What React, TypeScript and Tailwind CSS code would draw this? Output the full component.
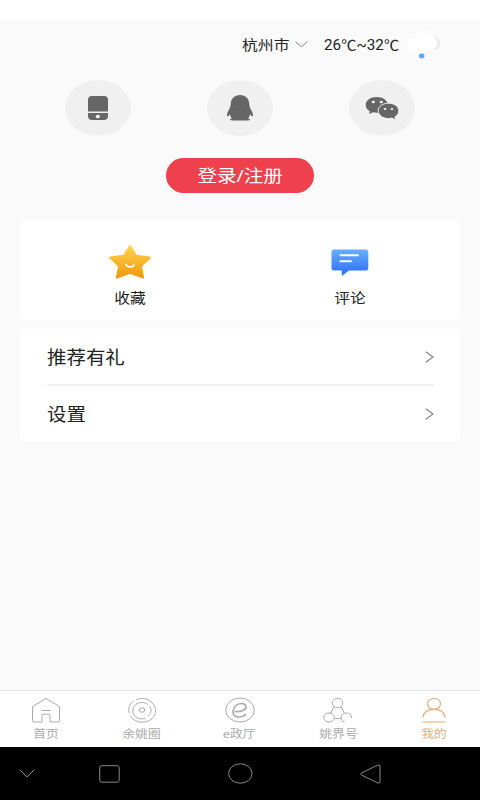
import React from 'react';

interface TabProps {
  label: string;
  className: string;
  children: React.ReactNode;
}

const PhoneIcon = () => (
  <svg className="w-[66px] h-[56px]" viewBox="0 0 66 56">
    <path d="M23 31.500V20q0-4 4-4h12q4 0 4 4v11.500z" fill="#666" />
    <path d="M23 33h20V36q0 4-4 4H27q-4 0-4-4z" fill="#666" />
    <ellipse cx="32.800" cy="36.500" rx="2.100" ry="1.700" fill="#fff" />
  </svg>
);

const QQIcon = () => (
  <svg className="w-[66px] h-[56px]" viewBox="0 0 66 56">
    <path
      d="M33 15c-5.500 0-9 3.500-9.300 9-.1 2.500-.9 4.200-1.900 6-1.700 3-2.300 5.700-1.500 6.300.6.400 1.700-.6 2.700-2 .2 1.800 1 3.200 2 4.200-1.200.3-1.900.7-1.900 1.200 0 .6 1 .8 3.200.8h13.400c2.200 0 3.200-.2 3.200-.8 0-.5-.7-.9-1.900-1.200 1-1 1.800-2.400 2-4.200 1 1.400 2.100 2.400 2.700 2 .8-.6.200-3.300-1.500-6.300-1-1.800-1.800-3.500-1.900-6-.3-5.500-3.800-9-9.300-9z"
      fill="#666"
    />
    <path d="M28 26.500h4M36 26.500h3" stroke="#777" strokeWidth="0.700" />
  </svg>
);

const WechatIcon = () => (
  <svg className="w-[66px] h-[56px]" viewBox="0 0 66 56">
    <path d="M27.700 17c-6.400 0-11 3.500-11 8 0 2.700 1.500 4.800 4.100 6.200L20 34l4.200-1.700c1.100.3 2.300.5 3.500.5 6.400 0 11-3.300 11-7.800s-4.600-8-11-8z" fill="#666" />
    <path
      d="M39.500 23.200c-6 0-10.300 3.300-10.300 7.600s4.300 7.700 10.300 7.700c1.200 0 2.300-.1 3.300-.4l3.900 1.900-.8-3.100c2.400-1.400 3.900-3.500 3.900-6.100 0-4.300-4.300-7.600-10.300-7.600z"
      fill="#666"
      stroke="#f0f0f0"
      strokeWidth="1"
    />
    <g fill="#f4f4f4">
      <ellipse cx="24.300" cy="22" rx="1.600" ry="1.300" />
      <ellipse cx="32.300" cy="22" rx="1.600" ry="1.300" />
      <ellipse cx="36" cy="29" rx="1.300" ry="1.100" />
      <ellipse cx="43" cy="29" rx="1.300" ry="1.100" />
    </g>
  </svg>
);

const WeatherIcon = () => (
  <svg className="w-[36px] h-[32px] shrink-0" viewBox="0 0 36 32">
    <path d="M20 21h9a6.500 6.500 0 0 0 0-13h-4z" fill="#ececec" />
    <path d="M6.500 21.500a6.200 6.200 0 0 1 .8-12.200c1 0 1.900.2 2.600.6C10.600 5.200 14.500 2 19.500 2c5 0 8.500 3 9.200 6.500 2.300 1 3.300 3 3.300 5.500 0 4-3 7.500-7.500 7.500z" fill="#fff" />
    <ellipse cx="16.700" cy="27" rx="2.800" ry="2.400" fill="#60a9f8" />
  </svg>
);

const StarIcon = () => (
  <svg className="w-[44px] h-[36px]" viewBox="0 0 44 36">
    <defs>
      <linearGradient id="star" x1="0" y1="0" x2="0" y2="1">
        <stop offset="0" stopColor="#ffd250" />
        <stop offset="1" stopColor="#f09a08" />
      </linearGradient>
    </defs>
    <path
      d="M22 2l6.300 9.700 13.700 1.800L33 22l2.200 11.700L22 29 8.800 33.700 11 22 2 13.500l13.700-1.800z"
      fill="url(#star)"
      stroke="url(#star)"
      strokeWidth="1.800"
      strokeLinejoin="round"
    />
    <path d="M17.800 20.500c1.500 3.200 6.900 3.200 8.400 0" fill="none" stroke="#fff" strokeWidth="1.700" strokeLinecap="round" />
  </svg>
);

const CommentIcon = () => (
  <svg className="w-[38px] h-[28px]" viewBox="0 0 38 28">
    <defs>
      <linearGradient id="comment" x1="0" y1="0" x2="0" y2="1">
        <stop offset="0" stopColor="#68aeff" />
        <stop offset="1" stopColor="#2a6cf3" />
      </linearGradient>
    </defs>
    <path d="M3 .5h31.500q2.800 0 2.800 2.500v16q0 2.500-2.800 2.500H18L10.800 27V21.500H3Q.5 21.500.5 19V3Q.5.500 3 .5z" fill="url(#comment)" />
    <path d="M9.500 6.300h17.500M9.500 12.200h10.500" stroke="#fff" strokeWidth="1.900" strokeLinecap="round" />
  </svg>
);

const Social = ({ children }: { children: React.ReactNode }) => (
  <div className="w-[66px] h-[56px] rounded-[50%] bg-[#f0f0f0]">{children}</div>
);

const MenuRow = ({ label }: { label: string }) => (
  <div className="h-[55px] flex items-center justify-between">
    <span className="text-[18px] leading-6 text-[#222] origin-left scale-x-[1.08]">{label}</span>
    <svg className="w-[9px] h-[12px]" viewBox="0 0 9 12" fill="none" stroke="#808080" strokeWidth="1.100">
      <path d="M.8.700l7.200 5.300-7.200 5.300" />
    </svg>
  </div>
);

const Tab = ({ label, className, children }: TabProps) => (
  <div className={`flex flex-col items-center pt-[6px] ${className}`}>
    <svg className="w-[32px] h-[27px]" viewBox="0 0 32 27" fill="none" stroke="currentColor" strokeWidth="1">
      {children}
    </svg>
    <span className="mt-[2px] text-[11px] leading-[16px] whitespace-nowrap scale-x-[1.16]">{label}</span>
  </div>
);

export default function App() {
  return (
    <div className="w-[480px] h-[800px] overflow-hidden flex flex-col bg-[#fafafa] font-['Noto_Sans','Noto_Sans_CJK_SC',sans-serif]">
      <div className="h-5 bg-white shrink-0" />

      <header className="h-[60px] shrink-0 pt-[9px] pl-[242px] flex items-start">
        <div className="w-[53px] pt-[6px]">
          <span className="block text-[14px] leading-5 text-[#222] whitespace-nowrap origin-left scale-x-[1.13]">杭州市</span>
        </div>
        <svg className="w-[13px] h-[7px] mt-[12px]" viewBox="0 0 13 7" fill="none" stroke="#777" strokeWidth="0.900">
          <path d="M.5.700l6 5 6-5" />
        </svg>
        <div className="w-[81px] ml-[16px] pt-[6px]">
          <span className="block w-fit text-[14px] leading-5 text-[#222] whitespace-nowrap origin-left scale-x-[1.09] font-[Roboto,'Noto_Sans_CJK_SC',sans-serif]">
            26℃~32℃
          </span>
        </div>
        <WeatherIcon />
      </header>

      <div className="h-[56px] shrink-0 px-[65px] flex justify-between">
        <Social><PhoneIcon /></Social>
        <Social><QQIcon /></Social>
        <Social><WechatIcon /></Social>
      </div>

      <button className="mt-[22px] mx-auto w-[148px] h-[35px] shrink-0 rounded-full bg-[#ee404d] text-white flex items-center justify-center">
        <span className="pt-px text-[17px] leading-6 scale-x-[1.15]">登录/注册</span>
      </button>

      <main className="px-5 pt-[27px] flex-1">
        <section className="h-[100px] bg-white rounded-md grid grid-cols-2 pt-[24px]">
          <div className="flex flex-col items-center">
            <StarIcon />
            <span className="mt-[8px] text-[14px] leading-5 text-[#222] scale-x-[1.12]">收藏</span>
          </div>
          <div className="flex flex-col items-center pt-[5px]">
            <CommentIcon />
            <span className="mt-[11px] text-[14px] leading-5 text-[#222] scale-x-[1.12]">评论</span>
          </div>
        </section>

        <section className="mt-[9px] h-[113px] bg-white rounded-md pl-[27px] pr-[26px]">
          <MenuRow label="推荐有礼" />
          <div className="h-[2px] bg-[#f0f0f0]" />
          <MenuRow label="设置" />
        </section>
      </main>

      <nav className="h-[57px] shrink-0 flex bg-white border-t border-[#e5e5e5] text-[#aaa]">
        <Tab label="首页" className="w-[92px]">
          <path d="M2.500 9.500L16 1.500l13.500 8v14q0 1.500-1.500 1.500h-8v-7q0-.8-.8-.8h-6.400q-.8 0-.8.800v7H4q-1.500 0-1.500-1.500zM11.500 13.500h9" />
        </Tab>
        <Tab label="余姚圈" className="w-[99px]">
          <path d="M10 2.800C14 1 19 .8 23.500 3.500 32 9 31.500 19 23.500 23.300 17 27 8 25 4 18.500M3.300 16C1.800 11.500 3.500 7 7 4.500" />
          <path d="M22 7.500C15.500 2.500 6.800 7 6.800 13.500c0 6 5.500 9.500 12.200 8M23.800 9.500c2.500 4 .9 7.800-2.300 10" />
          <ellipse cx="16" cy="13" rx="2.700" ry="2.300" />
        </Tab>
        <Tab label="e政厅" className="w-[97px]">
          <ellipse cx="16" cy="13" rx="14.300" ry="12" />
          <path d="M10.500 14.500c6.500.5 11-1.500 11.500-4 .5-2.700-2-4-4.500-4-5 0-8.500 4-8.500 8.200 0 3.300 2.500 5.300 6 5.300 3 0 5.500-1.200 7-3" strokeWidth="1.700" />
        </Tab>
        <Tab label="姚界号" className="w-[100px]">
          <ellipse cx="15.500" cy="6" rx="5.300" ry="4.600" />
          <ellipse cx="7" cy="20.500" rx="5.300" ry="4.600" />
          <path d="M12 9.800L8.800 16M19 9.800l3.200 6M12.300 21.500h6.500M22.500 25c-4.500-1.500-5-7 0-8.700 4-1.200 7.700 1.200 7 4.700" />
        </Tab>
        <Tab label="我的" className="w-[92px] text-[#e3ad7b]">
          <ellipse cx="16" cy="6.800" rx="6.500" ry="5.500" strokeWidth="1.200" />
          <path d="M4.800 20.500C5.500 15.500 9.500 12.300 16 12.300S26.500 15.500 27.200 20.500M4.500 25h23" strokeWidth="1.200" />
        </Tab>
      </nav>

      <div className="h-[53px] shrink-0 bg-black flex items-center pl-[19px]">
        <svg className="w-[16px] h-[9px]" viewBox="0 0 16 9" fill="none" stroke="#999">
          <path d="M.7.800l7.300 7 7.300-7" />
        </svg>
        <svg className="ml-[64px] w-[21px] h-[18px]" viewBox="0 0 21 18" fill="none" stroke="#888">
          <rect x="0.700" y="0.700" width="19.500" height="16.500" rx="2" />
        </svg>
        <svg className="ml-[108px] w-[25px] h-[21px]" viewBox="0 0 25 21" fill="none" stroke="#888">
          <ellipse cx="12.300" cy="10.500" rx="11.700" ry="9.700" />
        </svg>
        <svg className="ml-[107px] w-[21px] h-[20px]" viewBox="0 0 21 20" fill="none" stroke="#888" strokeLinejoin="round">
          <path d="M1.500 9L17.800 1q2-.7 2.200 1v16q-.2 1.700-2.200 1L1.500 11q-1.500-1 0-2z" />
        </svg>
      </div>
    </div>
  );
}
